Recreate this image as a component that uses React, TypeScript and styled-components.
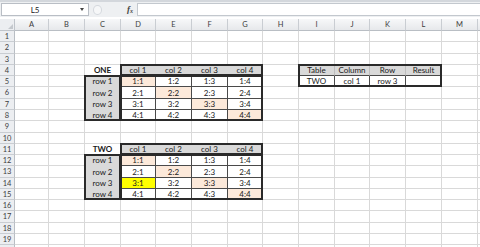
import React from 'react';
import styled, { createGlobalStyle } from 'styled-components';

const COL_WIDTHS = [34, 36, 36, 35, 36, 36, 35, 36, 36, 35, 36, 36, 36, 36];
const COL_NAMES = 'ABCDEFGHIJKLMN'.split('');
const VISIBLE_COLS = 13;
const ROW_HEIGHTS = [11, 12, 11, 11, 11, 12, 11, 11, 12, 11, 11, 11, 12, 11, 11, 11, 12, 11, 11, 11];
const VISIBLE_ROWS = 19;

type Fill = 'head' | 'peach' | 'yellow';
type Kind = 'grid' | 'data' | 'lookHead' | 'lookBody';

interface CellSpec {
  v?: string;
  fill?: Fill;
  bold?: boolean;
  kind?: Kind;
}

type Range = [string, number, string, number];

const cells: Record<string, CellSpec> = {};
const frames: Range[] = [];

const colIndex = (c: string) => COL_NAMES.indexOf(c) + 1;

const addTable = (name: string, top: number) => {
  cells[`C${top}`] = { v: name, bold: true };
  ['D', 'E', 'F', 'G'].forEach((c, i) => {
    cells[`${c}${top}`] = { v: `col ${i + 1}`, fill: 'head' };
  });
  for (let r = 1; r <= 4; r++) {
    cells[`C${top + r}`] = { v: `row ${r}`, fill: 'head' };
    ['D', 'E', 'F', 'G'].forEach((c, i) => {
      cells[`${c}${top + r}`] = {
        v: `${r}:${i + 1}`,
        kind: 'data',
        fill: r === i + 1 ? 'peach' : undefined,
      };
    });
  }
  frames.push(['D', top, 'G', top], ['C', top + 1, 'C', top + 4], ['D', top + 1, 'G', top + 4]);
};

addTable('ONE', 4);
addTable('TWO', 11);
cells.D14.fill = 'yellow';

['Table', 'Column', 'Row', 'Result'].forEach((v, i) => {
  cells[`${'IJKL'[i]}4`] = { v, fill: 'head', kind: 'lookHead' };
});
['TWO', 'col 1', 'row 3', ''].forEach((v, i) => {
  cells[`${'IJKL'[i]}5`] = { v, kind: 'lookBody' };
});
frames.push(['I', 4, 'L', 5]);

const FILLS: Record<Fill, string> = {
  head: '#d9d9d9',
  peach: '#fce9da',
  yellow: '#ffff00',
};

const GlobalStyle = createGlobalStyle`
  html, body {
    margin: 0;
    padding: 0;
    background: #ffffff;
  }
  body {
    font-family: Lato, "Open Sans", sans-serif;
    overflow: hidden;
  }
`;

const App = () => (
  <Window>
    <GlobalStyle />
    <FormulaBar>
      <NameBox>
        <NameText>L5</NameText>
        <DropArrow />
      </NameBox>
      <Grip />
      <Fx>
        f<sub>x</sub>
      </Fx>
      <FormulaInput />
    </FormulaBar>
    <Sheet>
      <Corner>
        <CornerMark />
      </Corner>
      {COL_NAMES.map((c, i) => (
        <ColHeader key={c} $col={i + 2}>
          {i < VISIBLE_COLS ? c : ''}
        </ColHeader>
      ))}
      {ROW_HEIGHTS.map((_, r) => (
        <React.Fragment key={r}>
          <RowHeader $row={r + 2}>{r < VISIBLE_ROWS ? r + 1 : ''}</RowHeader>
          {COL_NAMES.map((c, ci) => {
            const spec = cells[`${c}${r + 1}`] || {};
            return (
              <Cell
                key={c}
                $row={r + 2}
                $col={ci + 2}
                $fill={spec.fill}
                $kind={spec.kind || 'grid'}
              >
                {spec.v ? <CellText $bold={spec.bold}>{spec.v}</CellText> : null}
              </Cell>
            );
          })}
        </React.Fragment>
      ))}
      {frames.map(([c1, r1, c2, r2]) => (
        <Frame
          key={`${c1}${r1}${c2}${r2}`}
          $c1={colIndex(c1) + 1}
          $c2={colIndex(c2) + 2}
          $r1={r1 + 1}
          $r2={r2 + 2}
        />
      ))}
    </Sheet>
  </Window>
);

export default App;

const Window = styled.div`
  width: 480px;
  height: 247px;
  overflow: hidden;
  background: #ffffff;
`;

const FormulaBar = styled.div`
  height: 14px;
  padding-top: 1px;
  border-top: 2px solid #d3d7dc;
  background: #eef0f2;
  display: flex;
  align-items: flex-start;
`;

const NameBox = styled.div`
  margin-left: 1px;
  width: 86px;
  height: 11px;
  border: 1px solid #b9bec5;
  background: #ffffff;
  display: flex;
  align-items: center;
`;

const NameText = styled.span`
  flex: 1;
  text-align: center;
  padding-right: 12px;
  font-size: 8px;
  color: #222222;
`;

const DropArrow = styled.span`
  width: 0;
  height: 0;
  margin-right: 4px;
  border-left: 2px solid transparent;
  border-right: 2px solid transparent;
  border-top: 3px solid #444444;
`;

const Grip = styled.div`
  margin: 2px 0 0 4px;
  width: 7px;
  height: 8px;
  border-radius: 50%;
  border: 1px solid #d4d8dd;
  background: #f6f7f8;
`;

const Fx = styled.div`
  margin-left: 25px;
  width: 10px;
  height: 12px;
  font-family: "Liberation Serif", serif;
  font-style: italic;
  font-weight: bold;
  font-size: 9px;
  line-height: 12px;
  color: #444444;

  sub {
    font-size: 6px;
    vertical-align: -1px;
  }
`;

const FormulaInput = styled.div`
  flex: 1;
  height: 11px;
  border: 1px solid #c3c8ce;
  border-right: none;
  background: #ffffff;
`;

const Sheet = styled.div`
  margin-top: 2px;
  display: grid;
  grid-template-columns: 15px ${COL_WIDTHS.map((w) => `${w}px`).join(' ')};
  grid-template-rows: 12px ${ROW_HEIGHTS.map((h) => `${h}px`).join(' ')};
`;

const Corner = styled.div`
  grid-row: 1;
  grid-column: 1;
  box-sizing: border-box;
  background: #eceef1;
  border-right: 1px solid #bfc4ca;
  border-bottom: 1px solid #bfc4ca;
  position: relative;
`;

const CornerMark = styled.span`
  position: absolute;
  right: 1px;
  bottom: 1px;
  width: 0;
  height: 0;
  border-left: 5px solid transparent;
  border-bottom: 5px solid #c4c8cd;
`;

const ColHeader = styled.div<{ $col: number }>`
  grid-row: 1;
  grid-column: ${({ $col }) => $col};
  box-sizing: border-box;
  background: linear-gradient(#f7f8f9, #e6e8eb);
  border-right: 1px solid #c9cdd2;
  border-bottom: 1px solid #b9bec4;
  font-size: 7.5px;
  line-height: 11px;
  text-align: center;
  color: #3d3d3d;
`;

const RowHeader = styled.div<{ $row: number }>`
  grid-row: ${({ $row }) => $row};
  grid-column: 1;
  box-sizing: border-box;
  background: #eceef1;
  border-right: 1px solid #b9bec4;
  border-bottom: 1px solid #c9cdd2;
  font-size: 7.5px;
  text-align: center;
  color: #3d3d3d;
  display: flex;
  align-items: center;
  justify-content: center;
`;

const borderFor = (kind: Kind, fill?: Fill) => {
  if (kind === 'data' || kind === 'lookBody') return { right: '#4a4a4a', bottom: '#4a4a4a' };
  if (kind === 'lookHead') return { right: '#bdbdbd', bottom: '#4a4a4a' };
  if (fill) return { right: FILLS[fill], bottom: FILLS[fill] };
  return { right: '#d9d9d9', bottom: '#d9d9d9' };
};

const Cell = styled.div<{
  $row: number;
  $col: number;
  $fill?: Fill;
  $kind: Kind;
}>`
  grid-row: ${({ $row }) => $row};
  grid-column: ${({ $col }) => $col};
  box-sizing: border-box;
  background: ${({ $fill }) => ($fill ? FILLS[$fill] : '#ffffff')};
  border-right: 1px solid ${({ $kind, $fill }) => borderFor($kind, $fill).right};
  border-bottom: 1px solid ${({ $kind, $fill }) => borderFor($kind, $fill).bottom};
  display: flex;
  align-items: center;
  justify-content: center;
  padding-top: 1px;
`;

const CellText = styled.span<{ $bold?: boolean }>`
  position: relative;
  z-index: 2;
  font-size: 8px;
  line-height: 9px;
  font-weight: ${({ $bold }) => ($bold ? 700 : 400)};
  color: #1a1a1a;
  white-space: nowrap;
`;

const Frame = styled.div<{ $c1: number; $c2: number; $r1: number; $r2: number }>`
  grid-column: ${({ $c1, $c2 }) => `${$c1} / ${$c2}`};
  grid-row: ${({ $r1, $r2 }) => `${$r1} / ${$r2}`};
  position: relative;
  z-index: 1;
  margin: -1px 0 0 -1px;
  box-sizing: border-box;
  border: 2px solid #2a2a2a;
  pointer-events: none;
`;
